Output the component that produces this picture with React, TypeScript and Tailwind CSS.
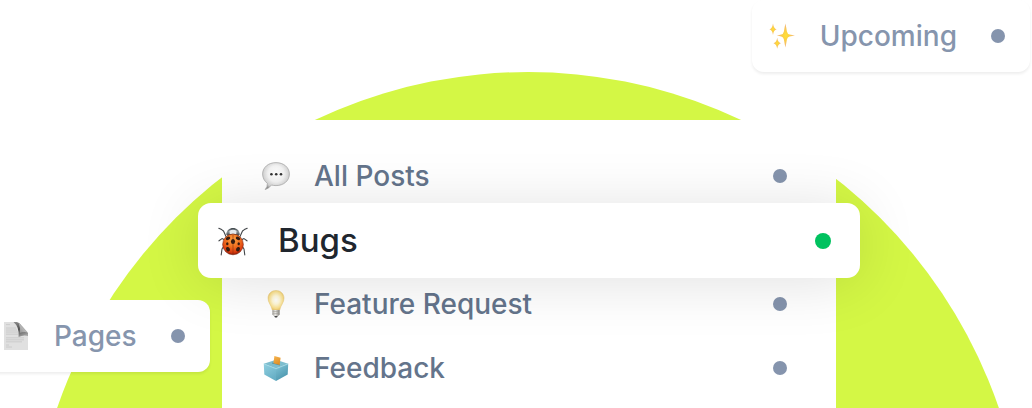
import React, { type ReactNode } from "react";

function SpeechIcon() {
  return (
    <svg viewBox="0 0 28 28" className="size-7" aria-hidden="true">
      <defs>
        <radialGradient id="speech" cx="0.5" cy="0.42" r="0.6">
          <stop offset="0" stopColor="#ffffff" />
          <stop offset="0.5" stopColor="#f3f3f3" />
          <stop offset="0.82" stopColor="#d2d2d2" />
          <stop offset="1" stopColor="#8f8f8f" />
        </radialGradient>
      </defs>
      <path d="M14 0.6 C21.6 0.6 27.4 5.4 27.4 12 C27.4 18.8 21.6 23.6 14 23.6 C12.4 23.6 10.8 23.4 9.5 23 Q7 26.4 3.2 27.6 Q5.6 24.6 5.4 21.4 C2.4 19.2 0.6 15.8 0.6 12 C0.6 5.4 6.4 0.6 14 0.6 Z" fill="url(#speech)" stroke="#a4a4a4" strokeWidth="0.7" />
      <circle cx="9.4" cy="12.3" r="1.3" fill="#333" />
      <circle cx="14.2" cy="12.3" r="1.3" fill="#333" />
      <circle cx="19" cy="12.3" r="1.3" fill="#333" />
    </svg>
  );
}

function LadybugIcon() {
  return (
    <svg viewBox="0 0 30 30" className="size-[30px]" aria-hidden="true">
      <defs>
        <radialGradient id="bug" cx="0.5" cy="0.28" r="0.75">
          <stop offset="0" stopColor="#ffa544" />
          <stop offset="0.45" stopColor="#f0701f" />
          <stop offset="0.8" stopColor="#d93a0e" />
          <stop offset="1" stopColor="#7b1606" />
        </radialGradient>
        <linearGradient id="bugHead" x1="0" y1="0" x2="0" y2="1">
          <stop offset="0" stopColor="#3b4246" />
          <stop offset="0.45" stopColor="#8d959a" />
          <stop offset="1" stopColor="#2b3033" />
        </linearGradient>
      </defs>
      <g fill="none" stroke="#43474a" strokeWidth="1.1" strokeLinecap="round" strokeLinejoin="round">
        <path d="M8 10.5 L5.5 5 L3.6 3.6 L0.8 2.2 M22 10.5 L24.5 5 L26.4 3.6 L29.2 2.2" />
        <path d="M6 13.5 L4 12.6 L1 14.8 M24 13.5 L26 12.6 L29 14.8" />
        <path d="M6 20 L4 23 L3.2 29 M24 20 L26 23 L26.8 29" />
      </g>
      <path d="M8.2 8.4 C8.6 4.4 11.4 2 15 2 C18.6 2 21.4 4.4 21.8 8.4 L19.5 10.4 H10.5 Z" fill="url(#bugHead)" />
      <path d="M11.4 4.8 Q15 2.6 18.6 4.8 L18.2 8.2 Q15 7.2 11.8 8.2 Z" fill="#e4e9ec" />
      <ellipse cx="15" cy="18.4" rx="10.4" ry="10.4" fill="url(#bug)" stroke="#691407" strokeWidth="0.5" />
      <path d="M15 9 V28.5" stroke="#8a2d0a" strokeWidth="0.6" />
      <g fill="#351b10">
        <ellipse cx="15" cy="15.5" rx="2.1" ry="2.6" />
        <ellipse cx="10" cy="12.4" rx="2.3" ry="1.6" transform="rotate(-25 10 12.4)" />
        <ellipse cx="20" cy="12.4" rx="2.3" ry="1.6" transform="rotate(25 20 12.4)" />
        <ellipse cx="9.3" cy="17.8" rx="1.2" ry="1.5" />
        <ellipse cx="20.7" cy="17.8" rx="1.2" ry="1.5" />
        <ellipse cx="10" cy="23.2" rx="1.9" ry="2.3" transform="rotate(-25 10 23.2)" />
        <ellipse cx="20" cy="23.2" rx="1.9" ry="2.3" transform="rotate(25 20 23.2)" />
      </g>
    </svg>
  );
}

function BulbIcon() {
  return (
    <svg viewBox="0 0 28 28" className="size-7" aria-hidden="true">
      <defs>
        <radialGradient id="bulb" cx="0.5" cy="0.48" r="0.55">
          <stop offset="0" stopColor="#ffffff" />
          <stop offset="0.4" stopColor="#fff8d8" />
          <stop offset="0.8" stopColor="#fae08c" />
          <stop offset="1" stopColor="#e4bd62" />
        </radialGradient>
        <linearGradient id="bulbBase" x1="0" y1="0" x2="1" y2="0">
          <stop offset="0" stopColor="#a3a19b" />
          <stop offset="0.4" stopColor="#ecebe8" />
          <stop offset="1" stopColor="#85837d" />
        </linearGradient>
      </defs>
      <path d="M14 0.5 C18.7 0.5 22 3.9 22 8.2 C22 12.7 18.8 14.8 17.8 20 H10.2 C9.2 14.8 6 12.7 6 8.2 C6 3.9 9.3 0.5 14 0.5 Z" fill="url(#bulb)" stroke="#ecd18a" strokeWidth="0.6" />
      <path d="M10.4 20 H17.6 V24.6 L16.2 26 H11.8 L10.4 24.6 Z" fill="url(#bulbBase)" />
      <path d="M10.4 21.7 L17.6 21.2 M10.4 23.8 L17.6 23.3" stroke="#9a978f" strokeWidth="0.5" />
      <path d="M12.2 26 H15.8 L15 27.6 H13 Z" fill="#464646" />
    </svg>
  );
}

function BallotIcon() {
  return (
    <svg viewBox="0 0 28 28" className="size-7" aria-hidden="true">
      <defs>
        <linearGradient id="boxLeft" x1="0" y1="0" x2="0.5" y2="1">
          <stop offset="0" stopColor="#90cfe0" />
          <stop offset="1" stopColor="#68b0c6" />
        </linearGradient>
        <linearGradient id="boxRight" x1="0" y1="0" x2="0.5" y2="1">
          <stop offset="0" stopColor="#82c6d8" />
          <stop offset="1" stopColor="#4c96ae" />
        </linearGradient>
        <linearGradient id="ballot" x1="0" y1="0" x2="0.4" y2="1">
          <stop offset="0" stopColor="#f7b653" />
          <stop offset="1" stopColor="#e08f24" />
        </linearGradient>
      </defs>
      <path d="M1.8 9.7 L14 5.8 L26.2 9.7 L14 14.6 Z" fill="#7dbdce" />
      <path d="M1.8 9.7 L14 14.6 V27 L2.3 20.6 Z" fill="url(#boxLeft)" />
      <path d="M26.2 9.7 L14 14.6 V27 L25.7 20.6 Z" fill="url(#boxRight)" />
      <path d="M1.8 9.9 L14 14.8 L26.2 9.9" fill="none" stroke="#a5dbe7" strokeWidth="0.7" />
      <path d="M10 9 L18 11" stroke="#4a8b9d" strokeWidth="0.9" />
      <path d="M12.4 2 L18.6 3.8 L17.6 11 L11.4 9.2 Z" fill="url(#ballot)" />
    </svg>
  );
}

function SparklesIcon() {
  return (
    <svg viewBox="0 0 28 28" className="size-7" aria-hidden="true">
      <defs>
        <radialGradient id="spark">
          <stop offset="0" stopColor="#ffe135" />
          <stop offset="0.35" stopColor="#fcd044" />
          <stop offset="1" stopColor="#efb483" />
        </radialGradient>
      </defs>
      <g fill="url(#spark)">
        <path d="M17.4 1.5 Q18.4 6 18.9 9.4 Q19.4 11.9 21.6 12.4 Q24 12.9 27 13.5 Q24 14.1 21.6 14.6 Q19.4 15.1 18.9 17.6 Q18.4 21 17.4 25.5 Q16.4 21 15.9 17.6 Q15.4 15.1 13.2 14.6 Q11.4 14.2 8.8 13.5 Q11.4 12.8 13.2 12.4 Q15.4 11.9 15.9 9.4 Q16.4 6 17.4 1.5 Z" />
        <path d="M5 1.4 Q5.7 6.4 8.6 7.2 Q5.7 8 5 13 Q4.3 8 1.4 7.2 Q4.3 6.4 5 1.4 Z" />
        <path d="M9.2 15.8 Q9.9 20.5 12.9 21.3 Q9.9 22.1 9.2 26.8 Q8.5 22.1 5.5 21.3 Q8.5 20.5 9.2 15.8 Z" />
      </g>
    </svg>
  );
}

function PageIcon() {
  return (
    <svg viewBox="0 0 28 28" className="size-7" aria-hidden="true">
      <defs>
        <linearGradient id="curl" x1="0.2" y1="0" x2="0.6" y2="1">
          <stop offset="0" stopColor="#8a8a8a" />
          <stop offset="0.5" stopColor="#4c4c4c" />
          <stop offset="1" stopColor="#a5a5a5" />
        </linearGradient>
        <linearGradient id="fold" x1="0" y1="1" x2="1" y2="0">
          <stop offset="0" stopColor="#8c8c8c" />
          <stop offset="1" stopColor="#e6e6e6" />
        </linearGradient>
      </defs>
      <path d="M2 0 H14 L26 11.5 V28 H2 Z" fill="#e0e0e0" />
      <path d="M4 2.6 H8 M4 6 H14 M4 8 H15 M4 10 H16 M4 12.2 H16 M4 15.8 H22 M4 17.8 H22 M4 19.8 H20 M4 23 H7 M4 25 H10" stroke="#c6c6c6" strokeWidth="0.8" />
      <path d="M11.5 0 H14.5 Q16.2 0.2 17.6 1.6 L26 11 V14 Q21.5 12.6 16.6 15 Q17.6 5 11.5 0 Z" fill="url(#curl)" />
      <path d="M16.6 1 L26 10.4 Q21.5 9.4 17.8 11 Q18.4 5 16.6 1 Z" fill="url(#fold)" />
    </svg>
  );
}

type Board = { name: string; icon: ReactNode; active?: boolean };

const boards: Board[] = [
  { name: "All Posts", icon: <SpeechIcon /> },
  { name: "Bugs", icon: <LadybugIcon />, active: true },
  { name: "Feature Request", icon: <BulbIcon /> },
  { name: "Feedback", icon: <BallotIcon /> },
];

function BoardRow({ name, icon, active }: Board) {
  if (active) {
    return (
      <li className="relative z-10 -mx-6 -mt-[5px] -mb-1.5">
        <a
          href="#bugs"
          aria-current="page"
          className="flex h-[75px] items-center rounded-[13px] bg-white pr-[29px] pl-5 text-[33px] font-medium text-[#20262e] shadow-[0_4px_60px_rgba(0,0,0,0.12)]"
        >
          {icon}
          <span className="ml-[30px] flex-1">{name}</span>
          <span className="size-4 rounded-full bg-[#00c25f]" />
        </a>
      </li>
    );
  }
  return (
    <li>
      <a href="#board" className="flex h-16 items-center gap-6 pr-[49px] pl-10 text-[28px] font-medium text-[#64748b]">
        {icon}
        <span className="flex-1">{name}</span>
        <span className="size-3.5 rounded-full bg-[#8594ad]" />
      </a>
    </li>
  );
}

function FloatingCard({ name, icon, place }: { name: string; icon: ReactNode; place: string }) {
  return (
    <a
      href="#card"
      className={
        "absolute flex h-[72px] items-center rounded-xl bg-white pr-[25px] pl-4 text-[28px] font-medium text-[#8695ad] shadow-[0_2px_3px_rgba(0,0,0,0.07)] " +
        place
      }
    >
      {icon}
      <span className="mr-[34px] ml-6">{name}</span>
      <span className="size-3.5 rounded-full bg-[#8594ad]" />
    </a>
  );
}

export default function App() {
  return (
    <main className="relative h-screen overflow-hidden bg-white pt-[120px] pr-[196px] pl-[222px] font-['Inter',sans-serif]">
      <div className="absolute top-[72px] left-1/2 -ml-[486px] size-[996px] rounded-full bg-[#d4f745]" />
      <FloatingCard name="Upcoming" icon={<SparklesIcon />} place="top-0 right-0.5" />
      <FloatingCard name="Pages" icon={<PageIcon />} place="top-[300px] -left-3.5" />
      <ul className="relative bg-white py-6">
        {boards.map((board) => (
          <BoardRow key={board.name} {...board} />
        ))}
      </ul>
    </main>
  );
}
